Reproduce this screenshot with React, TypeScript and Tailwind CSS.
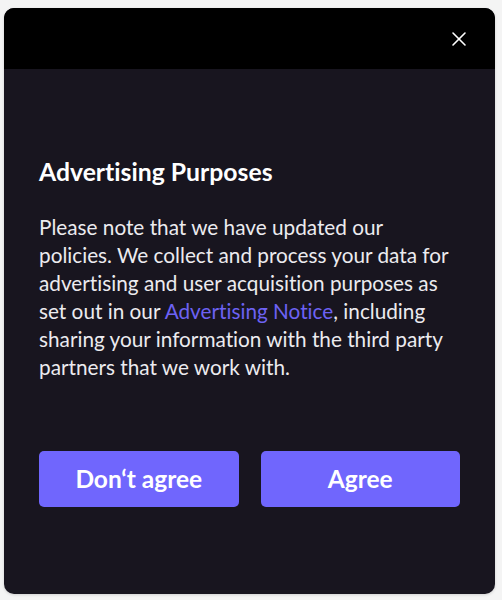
import { X } from "lucide-react";

const font = { fontFamily: "Lato, 'Open Sans', sans-serif" };

export default function App() {
  return (
    <div
      className="h-[600px] w-[502px] bg-[#f4f4f4] pt-[8px] pl-[4px] pr-[7px] pb-[6px] [font-variant-ligatures:none]"
      style={font}
    >
      <div className="flex h-[586px] flex-col overflow-hidden rounded-[10px] bg-[#18151f] shadow-[0_1px_3px_rgba(0,0,0,0.15)]">
        <div className="flex h-[61px] items-center justify-end bg-black pr-[24px]">
          <button type="button" className="text-white" aria-label="Close">
            <X size={24} strokeWidth={1.6} />
          </button>
        </div>
        <div className="px-[35px] pt-[88px]">
          <h1 className="text-[24.75px] leading-[30px] font-bold text-white">Advertising Purposes</h1>
          <p className="mt-[26px] text-[20.75px] leading-[28px] text-[#ecebef]">
            Please note that we have updated our policies. We collect and process your data for
            advertising and user acquisition purposes as set out in our{" "}
            <a className="text-[#6d62f3]">Advertising Notice</a>, including sharing your
            information with the third party partners that we work with.
          </p>
          <div className="mt-[70px] flex gap-[22px]">
            <button
              type="button"
              className="h-[56px] flex-1 rounded-[5px] bg-[#7066fd] text-[24.5px] font-bold text-white"
            >
              Don‘t agree
            </button>
            <button
              type="button"
              className="h-[56px] flex-1 rounded-[5px] bg-[#7066fd] text-[24.5px] font-bold text-white"
            >
              Agree
            </button>
          </div>
        </div>
      </div>
    </div>
  );
}
